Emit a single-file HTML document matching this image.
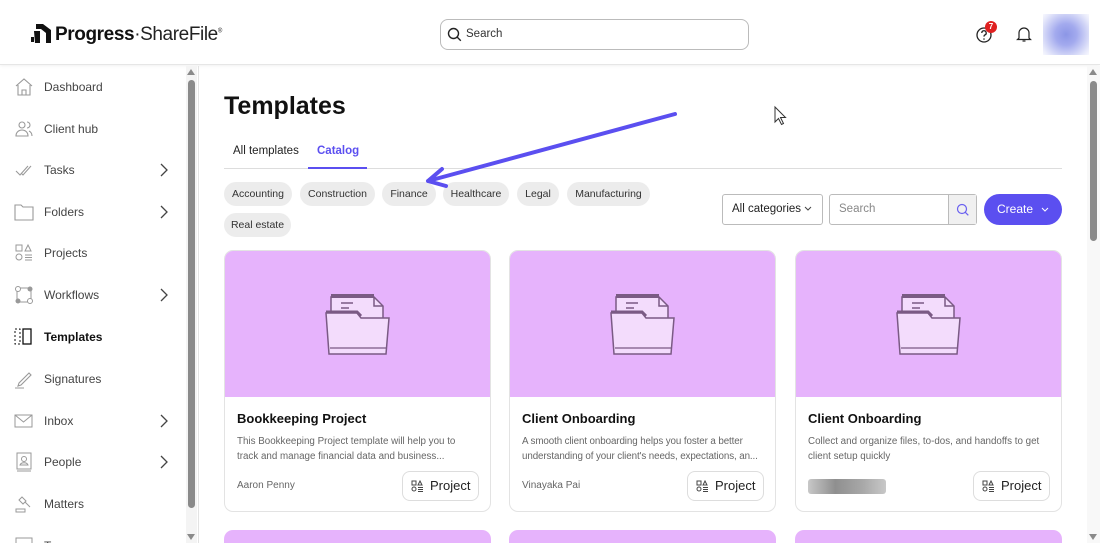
<!DOCTYPE html>
<html><head><meta charset="utf-8"><style>
*{box-sizing:border-box;margin:0;padding:0}
html,body{width:1100px;height:543px;overflow:hidden}
body{background:#fff;font-family:"Liberation Sans",Arial,sans-serif;color:#222;position:relative}
.abs{position:absolute}
.hdr{left:0;top:0;width:1100px;height:65px;background:#fff;border-bottom:1px solid #e6e6e6;box-shadow:0 1px 3px rgba(0,0,0,.06)}
.nav{left:0;width:186px;height:20px;font-size:12px;color:#444}
.nav .t{position:absolute;left:44px;top:3px}
.nav .ic{position:absolute;left:14px;top:0}
.nav .ch{position:absolute;left:159px;top:3px}
.chip{position:absolute;height:24px;border-radius:12px;background:#ececec;font-size:10.5px;color:#333;line-height:24px;text-align:center}
.card{position:absolute;width:267px;height:262px;border:1px solid #e3e3e3;border-radius:9px;overflow:hidden;background:#fff}
.card .img{height:146px;background:#e6b3fc;position:relative}
.card h3{position:absolute;left:12px;top:160px;font-size:13px;font-weight:bold;color:#111}
.card p{position:absolute;left:12px;top:183px;width:250px;font-size:9.8px;line-height:15px;color:#666;white-space:nowrap}
.card .au{position:absolute;left:12px;top:229px;font-size:10px;color:#666}
.card .pb{position:absolute;left:177px;top:220px;width:77px;height:30px;border:1px solid #ddd;border-radius:8px;font-size:13px;line-height:28px;padding-left:27px;color:#222}
.card .pb svg{position:absolute;left:8px;top:8px}
</style></head><body>
<div class="abs hdr"></div>
<svg class="abs" style="left:31px;top:23px" width="21" height="21" viewBox="0 0 21 21"><path d="M5 1h7l8 6v13h-5V10l-5-4H5z" fill="#111"/><path d="M3 8h6v12H4z" fill="#111"/><path d="M0 14h3v5H0z" fill="#111"/></svg>
<div class="abs" style="left:55px;top:24px;font-size:19px;color:#111;letter-spacing:-.4px"><span style="font-weight:600">Progress</span><span style="font-weight:normal;color:#222">·ShareFile</span><sup style="font-size:6px">®</sup></div>
<div class="abs" style="left:440px;top:19px;width:309px;height:31px;border:1px solid #bbb;border-radius:8px"></div>
<svg class="abs" style="left:447px;top:27px" width="15" height="15" viewBox="0 0 15 15"><circle cx="6.5" cy="6.5" r="5" fill="none" stroke="#222" stroke-width="1.4"/><path d="M10.3 10.3l3.5 3.5" stroke="#222" stroke-width="1.4"/></svg>
<div class="abs" style="left:466px;top:28px;font-size:11.5px;color:#333">Search</div>
<svg class="abs" style="left:975px;top:26px" width="18" height="18" viewBox="0 0 18 18"><circle cx="9" cy="9" r="7" fill="none" stroke="#222" stroke-width="1.3"/><path d="M6.8 7a2.2 2.2 0 1 1 3 2c-.7.3-.8.8-.8 1.6" fill="none" stroke="#222" stroke-width="1.3"/><circle cx="9" cy="13" r=".8" fill="#222"/></svg>
<div class="abs" style="left:985px;top:21px;width:12px;height:12px;border-radius:6px;background:#e02020;color:#fff;font-size:8px;text-align:center;line-height:12px;font-weight:bold">7</div>
<svg class="abs" style="left:1016px;top:26px" width="16" height="17" viewBox="0 0 16 17"><path d="M3 12V7a5 5 0 0 1 10 0v5l1.5 1.5h-13z" fill="none" stroke="#222" stroke-width="1.2"/><path d="M6.5 15h3" stroke="#222" stroke-width="1.2"/></svg>
<div class="abs" style="left:1043px;top:14px;width:46px;height:41px;background:radial-gradient(circle at 50% 50%,#8c96e6 0,#a3aaee 35%,#e8eafb 85%,#f8f8fe 100%)"></div>
<div class="abs" style="left:198px;top:66px;width:1px;height:477px;background:#e3e3e3"></div>
<div class="abs" style="left:186px;top:66px;width:11px;height:477px;background:#f4f4f4"></div>
<div class="abs" style="left:188px;top:80px;width:7px;height:428px;background:#8a8a8a;border-radius:4px"></div>
<div class="abs" style="left:187px;top:69px;width:0;height:0;border-left:4.5px solid transparent;border-right:4.5px solid transparent;border-bottom:6px solid #8a8a8a"></div>
<div class="abs" style="left:187px;top:534px;width:0;height:0;border-left:4.5px solid transparent;border-right:4.5px solid transparent;border-top:6px solid #8a8a8a"></div>

<div class="abs nav" style="top:77px"><svg class="ic" width="20" height="20" viewBox="0 0 20 20"><path d="M2 9l8-7 8 7M4 8v10h12V8M8 18v-5h4v5" fill="none" stroke="#999" stroke-width="1.1"/></svg><span class="t">Dashboard</span></div>
<div class="abs nav" style="top:119px"><svg class="ic" width="20" height="20" viewBox="0 0 20 20"><circle cx="8" cy="6" r="3" fill="none" stroke="#999" stroke-width="1.1"/><path d="M2 17c0-4 3-6 6-6s6 2 6 6zM13 3a3 3 0 0 1 0 6M15 12c2 1 3 3 3 5" fill="none" stroke="#999" stroke-width="1.1"/></svg><span class="t">Client hub</span></div>
<div class="abs nav" style="top:160px"><svg class="ic" width="20" height="20" viewBox="0 0 20 20"><path d="M2 11l4 4 8-9M7 13l2 2 8-9" fill="none" stroke="#999" stroke-width="1.1"/></svg><span class="t">Tasks</span><svg class="ch" width="10" height="14" viewBox="0 0 10 14"><path d="M2 1l6 6-6 6" fill="none" stroke="#444" stroke-width="1.3"/></svg></div>
<div class="abs nav" style="top:202px"><svg class="ic" width="20" height="20" viewBox="0 0 20 20"><path d="M1 3h6l2 2h10v13H1z" fill="none" stroke="#999" stroke-width="1.1"/></svg><span class="t">Folders</span><svg class="ch" width="10" height="14" viewBox="0 0 10 14"><path d="M2 1l6 6-6 6" fill="none" stroke="#444" stroke-width="1.3"/></svg></div>
<div class="abs nav" style="top:243px"><svg class="ic" width="20" height="20" viewBox="0 0 20 20"><rect x="2" y="2" width="6" height="6" fill="none" stroke="#999"/><path d="M14 2l3 6h-6z" fill="none" stroke="#999"/><circle cx="5" cy="14" r="3" fill="none" stroke="#999"/><path d="M11 12h7M11 14.5h7M11 17h7" stroke="#999"/></svg><span class="t">Projects</span></div>
<div class="abs nav" style="top:285px"><svg class="ic" width="20" height="20" viewBox="0 0 20 20"><rect x="3" y="3" width="14" height="14" rx="2" fill="none" stroke="#999"/><circle cx="4" cy="4" r="2.5" fill="#fff" stroke="#999"/><circle cx="16" cy="4" r="2.5" fill="#999"/><circle cx="4" cy="16" r="2.5" fill="#999"/><circle cx="16" cy="16" r="2.5" fill="#fff" stroke="#999"/></svg><span class="t">Workflows</span><svg class="ch" width="10" height="14" viewBox="0 0 10 14"><path d="M2 1l6 6-6 6" fill="none" stroke="#444" stroke-width="1.3"/></svg></div>
<div class="abs nav" style="top:327px;color:#111;font-weight:bold"><svg class="ic" width="20" height="20" viewBox="0 0 20 20"><path d="M1 2h5v15H1z" fill="none" stroke="#111" stroke-dasharray="2 2"/><rect x="9" y="2" width="8" height="15" fill="none" stroke="#111" stroke-width="1.3"/></svg><span class="t">Templates</span></div>
<div class="abs nav" style="top:369px"><svg class="ic" width="20" height="20" viewBox="0 0 20 20"><path d="M5 14l10-10 2 2-10 10-3 1zM1 19h9" fill="none" stroke="#999" stroke-width="1.1"/></svg><span class="t">Signatures</span></div>
<div class="abs nav" style="top:411px"><svg class="ic" width="20" height="20" viewBox="0 0 20 20"><rect x="1" y="4" width="17" height="12" fill="none" stroke="#999"/><path d="M1 4l8.5 7L18 4" fill="none" stroke="#999"/></svg><span class="t">Inbox</span><svg class="ch" width="10" height="14" viewBox="0 0 10 14"><path d="M2 1l6 6-6 6" fill="none" stroke="#444" stroke-width="1.3"/></svg></div>
<div class="abs nav" style="top:452px"><svg class="ic" width="20" height="20" viewBox="0 0 20 20"><rect x="3" y="1" width="14" height="16" fill="none" stroke="#999"/><circle cx="10" cy="7" r="2.5" fill="none" stroke="#999"/><path d="M6 13c1-3 7-3 8 0zM3 19h14" fill="none" stroke="#999"/></svg><span class="t">People</span><svg class="ch" width="10" height="14" viewBox="0 0 10 14"><path d="M2 1l6 6-6 6" fill="none" stroke="#444" stroke-width="1.3"/></svg></div>
<div class="abs nav" style="top:494px"><svg class="ic" width="20" height="20" viewBox="0 0 20 20"><path d="M8 3l4 4-3 3-4-4zM11 8l5 5M2 18h9v-3H2z" fill="none" stroke="#999"/></svg><span class="t">Matters</span></div>
<div class="abs nav" style="top:536px"><svg class="ic" width="20" height="20" viewBox="0 0 20 20"><rect x="2" y="2" width="16" height="14" fill="none" stroke="#999"/></svg><span class="t">Teams</span></div>

<div class="abs" style="left:224px;top:92px;font-size:25px;font-weight:bold;color:#111">Templates</div>
<div class="abs" style="left:233px;top:145px;font-size:11.5px;color:#222">All templates</div>
<div class="abs" style="left:317px;top:145px;font-size:11.5px;color:#5b4ff0;font-weight:bold">Catalog</div>
<div class="abs" style="left:224px;top:168px;width:838px;height:1px;background:#ddd"></div>
<div class="abs" style="left:308px;top:167px;width:59px;height:2px;background:#5b4ff0"></div>

<div class="chip" style="left:224px;top:182px;width:68px">Accounting</div>
<div class="chip" style="left:300px;top:182px;width:75px">Construction</div>
<div class="chip" style="left:382px;top:182px;width:54px">Finance</div>
<div class="chip" style="left:443px;top:182px;width:66px">Healthcare</div>
<div class="chip" style="left:517px;top:182px;width:42px">Legal</div>
<div class="chip" style="left:567px;top:182px;width:83px">Manufacturing</div>
<div class="chip" style="left:224px;top:213px;width:67px">Real estate</div>

<div class="abs" style="left:722px;top:194px;width:101px;height:31px;border:1px solid #bbb;border-radius:3px;font-size:11.5px;line-height:29px;padding-left:9px;color:#222">All categories <svg width="8" height="6" viewBox="0 0 8 6"><path d="M1 1l3 3 3-3" fill="none" stroke="#444"/></svg></div>
<div class="abs" style="left:829px;top:194px;width:148px;height:31px;border:1px solid #bbb;border-radius:3px;font-size:11.5px;line-height:29px;padding-left:9px;color:#888">Search</div>
<div class="abs" style="left:948px;top:195px;width:28px;height:29px;background:#f0f0f0;border-left:1px solid #bbb"></div>
<svg class="abs" style="left:956px;top:203px" width="13" height="13" viewBox="0 0 13 13"><circle cx="6" cy="6" r="4.5" fill="none" stroke="#6a60f0" stroke-width="1.2"/><path d="M9.3 9.3l3 3" stroke="#6a60f0" stroke-width="1.2"/></svg>
<div class="abs" style="left:984px;top:194px;width:78px;height:31px;border-radius:16px;background:#5b4ff0;color:#fff;font-size:12px;line-height:31px;padding-left:13px">Create <svg style="margin-left:5px" width="8" height="6" viewBox="0 0 8 6"><path d="M1 1l3 3 3-3" fill="none" stroke="#fff"/></svg></div>

<div class="card" style="left:224px;top:250px"><div class="img"><svg style="position:absolute;left:100px;top:40px" width="68" height="66" viewBox="0 0 68 66"><path d="M6 6h43l9 9v29H6z" fill="#f3dcfc" stroke="#7a5a84" stroke-width="1.5"/><path d="M6 3h43v4H6z" fill="#7a5a84"/><path d="M49 6v9h9" fill="none" stroke="#7a5a84" stroke-width="1.5"/><path d="M16 12h12M16 17h8" stroke="#7a5a84" stroke-width="1.5"/><path d="M1 22h31l4 5h28l-3 36H4z" fill="#f3dcfc" stroke="#7a5a84" stroke-width="1.5"/><path d="M1 21h31l4 4" fill="none" stroke="#7a5a84" stroke-width="3"/><path d="M5 57h56" stroke="#7a5a84" stroke-width="1.2"/></svg></div><h3>Bookkeeping Project</h3><p>This Bookkeeping Project template will help you to<br>track and manage financial data and business...</p><div class="au">Aaron Penny</div><div class="pb"><svg width="12" height="12" viewBox="0 0 12 12"><rect x="1" y="1" width="4" height="4" fill="none" stroke="#444"/><path d="M9 1l2 4H7z" fill="none" stroke="#444"/><circle cx="3" cy="9" r="2" fill="none" stroke="#444"/><path d="M7 7.5h5M7 9.5h5M7 11.5h5" stroke="#444"/></svg>Project</div></div>
<div class="card" style="left:509px;top:250px"><div class="img"><svg style="position:absolute;left:100px;top:40px" width="68" height="66" viewBox="0 0 68 66"><path d="M6 6h43l9 9v29H6z" fill="#f3dcfc" stroke="#7a5a84" stroke-width="1.5"/><path d="M6 3h43v4H6z" fill="#7a5a84"/><path d="M49 6v9h9" fill="none" stroke="#7a5a84" stroke-width="1.5"/><path d="M16 12h12M16 17h8" stroke="#7a5a84" stroke-width="1.5"/><path d="M1 22h31l4 5h28l-3 36H4z" fill="#f3dcfc" stroke="#7a5a84" stroke-width="1.5"/><path d="M1 21h31l4 4" fill="none" stroke="#7a5a84" stroke-width="3"/><path d="M5 57h56" stroke="#7a5a84" stroke-width="1.2"/></svg></div><h3>Client Onboarding</h3><p style="letter-spacing:-.1px">A smooth client onboarding helps you foster a better<br>understanding of your client's needs, expectations, an...</p><div class="au">Vinayaka Pai</div><div class="pb"><svg width="12" height="12" viewBox="0 0 12 12"><rect x="1" y="1" width="4" height="4" fill="none" stroke="#444"/><path d="M9 1l2 4H7z" fill="none" stroke="#444"/><circle cx="3" cy="9" r="2" fill="none" stroke="#444"/><path d="M7 7.5h5M7 9.5h5M7 11.5h5" stroke="#444"/></svg>Project</div></div>
<div class="card" style="left:795px;top:250px"><div class="img"><svg style="position:absolute;left:100px;top:40px" width="68" height="66" viewBox="0 0 68 66"><path d="M6 6h43l9 9v29H6z" fill="#f3dcfc" stroke="#7a5a84" stroke-width="1.5"/><path d="M6 3h43v4H6z" fill="#7a5a84"/><path d="M49 6v9h9" fill="none" stroke="#7a5a84" stroke-width="1.5"/><path d="M16 12h12M16 17h8" stroke="#7a5a84" stroke-width="1.5"/><path d="M1 22h31l4 5h28l-3 36H4z" fill="#f3dcfc" stroke="#7a5a84" stroke-width="1.5"/><path d="M1 21h31l4 4" fill="none" stroke="#7a5a84" stroke-width="3"/><path d="M5 57h56" stroke="#7a5a84" stroke-width="1.2"/></svg></div><h3>Client Onboarding</h3><p>Collect and organize files, to-dos, and handoffs to get<br>client setup quickly</p><div style="position:absolute;left:12px;top:228px;width:78px;height:15px;border-radius:3px;background:linear-gradient(90deg,#c8c8c8,#8f8f8f 35%,#a8a8a8 70%,#c8c8c8)"></div><div class="pb"><svg width="12" height="12" viewBox="0 0 12 12"><rect x="1" y="1" width="4" height="4" fill="none" stroke="#444"/><path d="M9 1l2 4H7z" fill="none" stroke="#444"/><circle cx="3" cy="9" r="2" fill="none" stroke="#444"/><path d="M7 7.5h5M7 9.5h5M7 11.5h5" stroke="#444"/></svg>Project</div></div>
<div class="abs" style="left:224px;top:530px;width:267px;height:13px;background:#e6b3fc;border-radius:9px 9px 0 0"></div>
<div class="abs" style="left:509px;top:530px;width:267px;height:13px;background:#e6b3fc;border-radius:9px 9px 0 0"></div>
<div class="abs" style="left:795px;top:530px;width:267px;height:13px;background:#e6b3fc;border-radius:9px 9px 0 0"></div>

<div class="abs" style="left:1087px;top:66px;width:13px;height:477px;background:#f8f8f8"></div>
<div class="abs" style="left:1090px;top:81px;width:7px;height:160px;background:#8a8a8a;border-radius:4px"></div>
<div class="abs" style="left:1089px;top:69px;width:0;height:0;border-left:4.5px solid transparent;border-right:4.5px solid transparent;border-bottom:6px solid #8a8a8a"></div>
<div class="abs" style="left:1089px;top:534px;width:0;height:0;border-left:4.5px solid transparent;border-right:4.5px solid transparent;border-top:6px solid #8a8a8a"></div>

<svg class="abs" style="left:0;top:0" width="1100" height="543"><path d="M675 114L428 181M442 169L428 181L446 186" fill="none" stroke="#5b4ff0" stroke-width="4" stroke-linecap="round" stroke-linejoin="round"/><path d="M775 107v15l3.5-3.5 3 6 2-1-3-6h5z" fill="#fff" stroke="#333" stroke-width="1"/></svg>
</body></html>
